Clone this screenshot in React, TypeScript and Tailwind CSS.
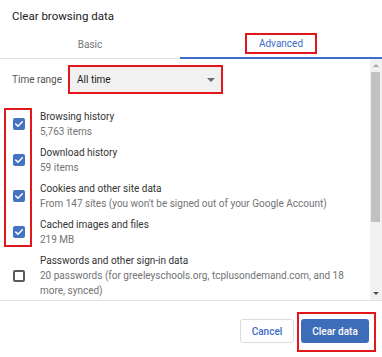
import React from "react";

type Item = { title: string; lines: string[]; checked: boolean };

const items: Item[] = [
  { title: "Browsing history", lines: ["5,763 items"], checked: true },
  { title: "Download history", lines: ["59 items"], checked: true },
  {
    title: "Cookies and other site data",
    lines: ["From 147 sites (you won't be signed out of your Google Account)"],
    checked: true,
  },
  { title: "Cached images and files", lines: ["219 MB"], checked: true },
  {
    title: "Passwords and other sign-in data",
    lines: ["20 passwords (for greeleyschools.org, tcplusondemand.com, and 18", "more, synced)"],
    checked: false,
  },
];

function Checkbox({ checked }: { checked: boolean }) {
  if (!checked) {
    return <div className="size-[12px] shrink-0 rounded-[2px] border-2 border-[#5a5a5a] bg-white" />;
  }
  return (
    <div className="flex size-[12px] shrink-0 items-center justify-center rounded-[2px] bg-[#4472c4]">
      <svg width="12" height="12" viewBox="0 0 12 12" fill="none">
        <path d="M2.8 6.1 L5 8.2 L9.3 3.8" stroke="white" strokeWidth="1.5" strokeLinecap="round" strokeLinejoin="round" />
      </svg>
    </div>
  );
}

export default function App() {
  return (
    <div className="flex h-[357px] w-[382px] flex-col overflow-hidden bg-white font-['Roboto','Liberation_Sans',sans-serif] text-[10px] text-[#333333]">
      <div className="h-[30px] pl-3 pt-[8px] text-[11.5px] leading-[16px] text-[#202124]">Clear browsing data</div>

      <div className="flex h-[29px] border-b border-[#e0e0e0]">
        <div className="flex w-[180px] items-center justify-center text-[#757575]">Basic</div>
        <div className="-mb-px flex flex-1 items-center justify-center border-b-2 border-[#3f6fcc]">
          <span className="flex h-[21px] w-[72px] items-center justify-center border-2 border-[#e3161c] text-[#3b6bc7]">
            Advanced
          </span>
        </div>
      </div>

      <div className="flex h-[241px] overflow-hidden">
        <div className="flex-1">
          <div className="mt-[6px] flex h-[29px] items-center pl-3">
            <span className="leading-[15px] text-[#555555]">Time range</span>
            <div className="ml-[6px] flex h-[29px] w-[155px] items-center justify-between border-2 border-[#e3161c] bg-[#f1f1f1] pl-[7px] pr-[6px]">
              <span className="text-[#222222]">All time</span>
              <span className="h-0 w-0 border-x-[4px] border-t-[4px] border-x-transparent border-t-[#6b6b6b]" />
            </div>
          </div>

          <div className="relative mt-[12px]">
            <div className="pointer-events-none absolute left-[4px] top-[2px] h-[139px] w-[28px] border-2 border-[#e3161c]" />
            {items.map((it) => (
              <div key={it.title} className="flex items-center py-[3px] pl-[13px]">
                <Checkbox checked={it.checked} />
                <div className="ml-[15px] leading-[15px]">
                  <div className="text-[#333333]">{it.title}</div>
                  {it.lines.map((l) => (
                    <div key={l} className="whitespace-nowrap text-[#737373]">
                      {l}
                    </div>
                  ))}
                </div>
              </div>
            ))}
          </div>
        </div>

        <div className="flex w-[12px] flex-col bg-[#f1f1f1]">
          <div className="flex h-[13px] items-center justify-center">
            <span className="h-0 w-0 border-x-[3px] border-b-[3px] border-x-transparent border-b-[#a3a3a3]" />
          </div>
          <div className="ml-px mr-[2px] h-[150px] bg-[#c1c1c1]" />
          <div className="flex-1" />
          <div className="flex h-[13px] items-center justify-center">
            <span className="h-0 w-0 border-x-[3px] border-t-[3px] border-x-transparent border-t-[#505050]" />
          </div>
        </div>
      </div>

      <div className="flex flex-1 items-start justify-end border-t border-[#e0e0e0] pr-[6px]">
        <button className="mt-[18px] h-[24px] w-[54px] rounded-[3px] border border-[#dadce0] bg-white font-medium text-[#3b6bc7]">
          Cancel
        </button>
        <div className="ml-[3px] mt-[11px] border-2 border-[#e3161c] pb-[7px] pl-[2px] pr-[5px] pt-[5px]">
          <button className="h-[24px] w-[68px] rounded-[3px] bg-[#3d6db8] font-medium text-white">Clear data</button>
        </div>
      </div>
    </div>
  );
}
